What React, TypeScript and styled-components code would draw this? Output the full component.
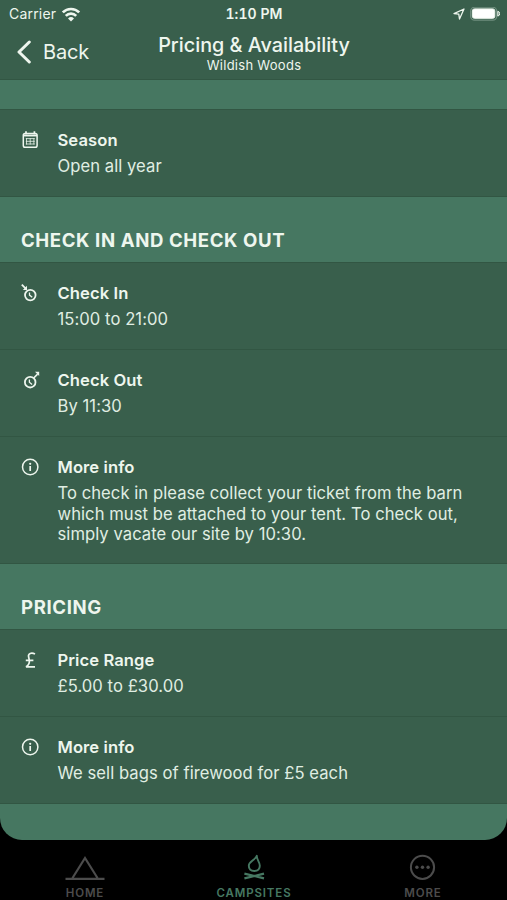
import React from "react";
import styled, { createGlobalStyle } from "styled-components";

const GlobalStyle = createGlobalStyle`
  * { box-sizing: border-box; }
  body { margin: 0; background: #000; font-family: Inter, "Liberation Sans", sans-serif; color: #eef6ee; }
  svg { display: block; fill: none; stroke: currentColor; }
`;

const Screen = styled.div`
  width: 507px;
  height: 900px;
  display: flex;
  flex-direction: column;
  overflow: hidden;
  background: #000;
`;

const Panel = styled.div`
  height: 840px;
  background: #467761;
  border-radius: 0 0 22px 22px;
  overflow: hidden;
`;

const Header = styled.header`
  height: 80px;
  background: #395f4c;
  border-bottom: 1px solid #325643;
`;

const StatusBar = styled.div`
  height: 28px;
  padding: 0 7px 0 9px;
  display: grid;
  grid-template-columns: 1fr auto 1fr;
  align-items: center;
  font-size: 14px;
  line-height: 28px;
`;

const Carrier = styled.div`
  display: flex;
  align-items: center;
  gap: 5px;
  letter-spacing: 0.2px;
`;

const Clock = styled.div`
  font-weight: 600;
  font-size: 14px;
  letter-spacing: 0.05px;
  padding-right: 1px;
  font-variant-numeric: tabular-nums;
`;

const Indicators = styled.div`
  display: flex;
  align-items: center;
  justify-content: flex-end;
  gap: 5px;
`;

const NavBar = styled.div`
  height: 51px;
  display: grid;
  grid-template-columns: 110px 1fr 110px;
`;

const Back = styled.div`
  display: flex;
  align-items: center;
  gap: 11px;
  height: 48px;
  padding-left: 16px;
  font-size: 20px;
  letter-spacing: -0.2px;
`;

const Titles = styled.div`
  display: flex;
  flex-direction: column;
  align-items: center;
  padding: 5px 0 0 1px;
`;

const Title = styled.div`
  font-size: 19.8px;
  line-height: 24px;
  font-weight: 500;
  white-space: nowrap;
`;

const Subtitle = styled.div`
  font-size: 13px;
  line-height: 16px;
  letter-spacing: 0.28px;
`;

const Spacer = styled.div`
  height: 29px;
`;

const SectionTitle = styled.h2`
  margin: 0;
  height: 65px;
  padding: 31px 21px 0;
  font-size: 18.6px;
  line-height: 24px;
  font-weight: 700;
  letter-spacing: 0.6px;
`;

const Group = styled.section`
  border-top: 1px solid #325643;
`;

const Row = styled.div<{ $height: number }>`
  height: ${(p) => p.$height}px;
  display: grid;
  grid-template-columns: 36.5px 1fr;
  padding: 20px 21px 0;
  background: #395f4c;
  border-bottom: 1px solid #325643;
`;

const Label = styled.div`
  margin-top: -1px;
  font-size: 16.6px;
  line-height: 22px;
  font-weight: 600;
  letter-spacing: 0.08px;
`;

const Value = styled.div`
  margin-top: 5px;
  font-size: 16.6px;
  line-height: 20.6px;
  letter-spacing: 0.06px;
  white-space: pre-line;
  color: #e0eee3;
`;

const TabBar = styled.nav`
  height: 60px;
  display: grid;
  grid-template-columns: repeat(3, 1fr);
`;

const Tab = styled.div<{ $active?: boolean }>`
  display: flex;
  flex-direction: column;
  align-items: center;
  padding-top: 12px;
  gap: 3px;
  color: ${(p) => (p.$active ? "#467862" : "#4c4c4c")};
`;

const TabLabel = styled.div`
  font-size: 11.5px;
  line-height: 16px;
  font-weight: 600;
  letter-spacing: 0.85px;
  padding-left: 1px;
`;

const WifiIcon = () => (
  <svg width="20" height="15" viewBox="0 0 20 15" strokeWidth="2.7">
    <path d="M1.8 5.4 A11.6 11.6 0 0 1 18.2 5.4" />
    <path d="M4.8 8.9 A7.3 7.3 0 0 1 15.2 8.9" />
    <path d="M10 14.4 L7 11.4 A4.3 4.3 0 0 1 13 11.4 Z" fill="currentColor" stroke="none" />
  </svg>
);

const LocationIcon = () => (
  <svg width="12" height="12" viewBox="0 0 12 12" strokeWidth="1.3" strokeLinejoin="round">
    <path d="M11 1 L1 5.6 L5.8 6.2 L6.5 11 Z" />
  </svg>
);

const BatteryIcon = () => (
  <svg width="30" height="15" viewBox="0 0 30 15" stroke="none">
    <rect x="0.7" y="0.2" width="26" height="13" rx="4" stroke="#6f8e7e" strokeWidth="1.3" />
    <rect x="2.4" y="1.9" width="22.4" height="9.4" rx="2" fill="#fff" />
    <path d="M27.8 4.3 Q29.8 4.9 29.8 6.7 Q29.8 8.5 27.8 9.1 Z" fill="#6f8e7e" />
  </svg>
);

const BackIcon = () => (
  <svg width="16" height="24" viewBox="0 0 16 24" strokeWidth="3" strokeLinecap="round" strokeLinejoin="round">
    <path d="M13.3 2 L3 12 L13.3 22" />
  </svg>
);

const CalendarIcon = () => (
  <svg width="18" height="20" viewBox="0 0 18 20">
    <path d="M5 1.2 V4.2 M13.4 1.2 V4.2" strokeWidth="1.7" />
    <rect x="2.3" y="3.5" width="13.8" height="13.8" rx="1.8" strokeWidth="1.5" />
    <path d="M2.4 5.5 H16" strokeWidth="1.9" />
    <path d="M4.8 8.6 H13.8 M4.8 11.3 H13.8 M4.8 14 H13.8" strokeWidth="0.8" />
    <path d="M5.5 8.2 V14.5 M9.2 8.2 V14.5 M12.9 8.2 V14.5" strokeWidth="0.8" />
  </svg>
);

const CheckInIcon = () => (
  <svg width="18" height="20" viewBox="0 0 18 20">
    <circle cx="9.3" cy="12.1" r="5.3" strokeWidth="1.8" />
    <path d="M8.5 9.5 V12.1 L11.2 14.3" strokeWidth="1.3" />
    <path d="M0.8 1.7 L5 5.9" strokeWidth="1.8" />
    <path d="M6 2.7 V6.9 H1.8 Z" fill="currentColor" stroke="none" />
  </svg>
);

const CheckOutIcon = () => (
  <svg width="20" height="20" viewBox="0 0 20 20">
    <circle cx="9.2" cy="12.2" r="5.3" strokeWidth="1.8" />
    <path d="M8.4 9.6 V12.2 L11.1 14.4" strokeWidth="1.3" />
    <path d="M12.7 8 L16.6 4.1" strokeWidth="1.6" />
    <path d="M14 1.8 H18.2 V6 Z" fill="currentColor" stroke="none" />
  </svg>
);

const InfoIcon = () => (
  <svg width="18" height="20" viewBox="0 0 18 20">
    <circle cx="9.2" cy="10" r="7.7" strokeWidth="1.5" />
    <path d="M9.2 9 V14" strokeWidth="1.7" />
    <circle cx="9.2" cy="6.8" r="1.1" fill="currentColor" stroke="none" />
  </svg>
);

const PoundIcon = () => (
  <svg width="18" height="20" viewBox="0 0 18 20" strokeWidth="1.7">
    <path d="M14 4 C10.4 2.1 6.9 3.5 7.6 6.7 L8.3 10.2 C8.8 13.2 7.6 15.4 5 16.8 H14 M4.8 10.4 H12.4" />
  </svg>
);

const TentIcon = () => (
  <svg width="40" height="30" viewBox="0 0 40 30" strokeWidth="2.2">
    <path d="M0.5 26.8 H39.5 M7.5 26 L20 6 L32.5 26" />
  </svg>
);

const CampfireIcon = () => (
  <svg width="24" height="30" viewBox="0 0 24 30" strokeWidth="1.9" strokeLinejoin="round">
    <path d="M14.8 3.8 C14.6 8 17.8 9.5 17.8 13.8 C17.8 17.3 15.3 19 12.3 19 C9 19 6.8 17 6.8 13.8 C6.8 9.2 13 8.5 14.8 3.8 Z" />
    <path d="M2.4 21.6 L22 26.4 M22 21.6 L2.4 26.4" strokeWidth="2.2" />
  </svg>
);

const MoreIcon = () => (
  <svg width="28" height="30" viewBox="0 0 28 30">
    <circle cx="13.5" cy="15.3" r="11.6" strokeWidth="2" />
    <g fill="currentColor" stroke="none">
      <circle cx="7.9" cy="15.3" r="1.7" />
      <circle cx="13.5" cy="15.3" r="1.7" />
      <circle cx="19.1" cy="15.3" r="1.7" />
    </g>
  </svg>
);

type InfoRowProps = { icon: React.ReactNode; label: string; value: string; height?: number };

const InfoRow = ({ icon, label, value, height = 87 }: InfoRowProps) => (
  <Row $height={height}>
    <div>{icon}</div>
    <div>
      <Label>{label}</Label>
      <Value>{value}</Value>
    </div>
  </Row>
);

export default function App() {
  return (
    <Screen>
      <GlobalStyle />
      <Panel>
        <Header>
          <StatusBar>
            <Carrier>
              Carrier
              <WifiIcon />
            </Carrier>
            <Clock>1:10 PM</Clock>
            <Indicators>
              <LocationIcon />
              <BatteryIcon />
            </Indicators>
          </StatusBar>
          <NavBar>
            <Back>
              <BackIcon />
              Back
            </Back>
            <Titles>
              <Title>Pricing &amp; Availability</Title>
              <Subtitle>Wildish Woods</Subtitle>
            </Titles>
          </NavBar>
        </Header>
        <Spacer />
        <Group>
          <InfoRow icon={<CalendarIcon />} label="Season" value="Open all year" />
        </Group>
        <SectionTitle>CHECK IN AND CHECK OUT</SectionTitle>
        <Group>
          <InfoRow icon={<CheckInIcon />} label="Check In" value="15:00 to 21:00" />
          <InfoRow icon={<CheckOutIcon />} label="Check Out" value="By 11:30" />
          <InfoRow
            icon={<InfoIcon />}
            label="More info"
            value={"To check in please collect your ticket from the barn\nwhich must be attached to your tent. To check out,\nsimply vacate our site by 10:30."}
            height={127}
          />
        </Group>
        <SectionTitle>PRICING</SectionTitle>
        <Group>
          <InfoRow icon={<PoundIcon />} label="Price Range" value="£5.00 to £30.00" />
          <InfoRow icon={<InfoIcon />} label="More info" value="We sell bags of firewood for £5 each" />
        </Group>
      </Panel>
      <TabBar>
        <Tab>
          <TentIcon />
          <TabLabel>HOME</TabLabel>
        </Tab>
        <Tab $active>
          <CampfireIcon />
          <TabLabel>CAMPSITES</TabLabel>
        </Tab>
        <Tab>
          <MoreIcon />
          <TabLabel>MORE</TabLabel>
        </Tab>
      </TabBar>
    </Screen>
  );
}
